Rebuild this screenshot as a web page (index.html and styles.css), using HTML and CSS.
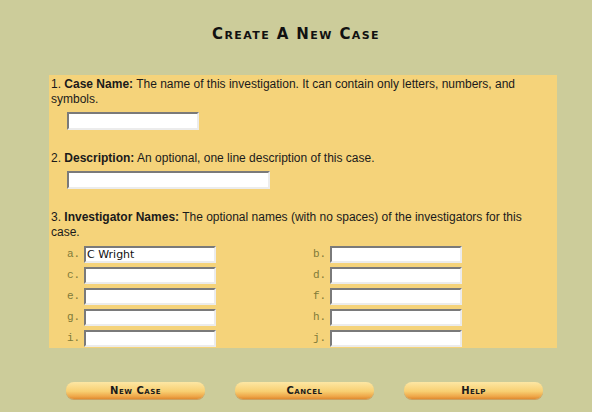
FILE: index.html
```html
<!DOCTYPE html>
<html lang="en">
<head>
    <meta charset="UTF-8">
    <title>Create A New Case</title>
    <link rel="stylesheet" href="styles.css">
</head>
<body>
    <div class="page">
        <h1 class="title">Create A New Case</h1>

        <form class="panel" id="caseForm">
            <div class="field">
                <p>1. <b>Case Name:</b> The name of this investigation. It can contain only letters, numbers, and symbols.</p>
                <input type="text" class="box box-name" name="case">
            </div>

            <div class="field">
                <p>2. <b>Description:</b> An optional, one line description of this case.</p>
                <input type="text" class="box box-desc" name="desc">
            </div>

            <div class="field">
                <p>3. <b>Investigator Names:</b> The optional names (with no spaces) of the investigators for this case.</p>
                <div class="names">
                    <label class="tag">a.</label><input type="text" class="box" name="inv1" value="C Wright"><span></span>
                    <label class="tag">b.</label><input type="text" class="box" name="inv2">
                    <label class="tag">c.</label><input type="text" class="box" name="inv3"><span></span>
                    <label class="tag">d.</label><input type="text" class="box" name="inv4">
                    <label class="tag">e.</label><input type="text" class="box" name="inv5"><span></span>
                    <label class="tag">f.</label><input type="text" class="box" name="inv6">
                    <label class="tag">g.</label><input type="text" class="box" name="inv7"><span></span>
                    <label class="tag">h.</label><input type="text" class="box" name="inv8">
                    <label class="tag">i.</label><input type="text" class="box" name="inv9"><span></span>
                    <label class="tag">j.</label><input type="text" class="box" name="inv10">
                </div>
            </div>
        </form>

        <div class="buttons">
            <button class="pill" form="caseForm">New Case</button>
            <button class="pill" type="button">Cancel</button>
            <button class="pill" type="button">Help</button>
        </div>
    </div>
</body>
</html>
```

FILE: styles.css
```css
/* Pagina de novo caso */
body {
    margin: 0;
    background-color: #ffffff;
    font-family: 'Liberation Sans', Arial, sans-serif;
}
.page {
    width: 592px;
    height: 412px;
    background-color: #cccc9a;
    padding-top: 24px;
    box-sizing: border-box;
}
.title {
    margin: 0 0 31px 0;
    text-align: center;
    font-family: 'DejaVu Sans', sans-serif;
    font-size: 15px;
    line-height: 20px;
    font-weight: bold;
    font-variant: small-caps;
    letter-spacing: 1.4px;
    color: #111;
}
.panel {
    margin-left: 49px;
    width: 508px;
    background-color: #f5d37a;
    padding: 2px 0 1px 2px;
    box-sizing: border-box;
    color: #1a1a1a;
}
.field p {
    margin: 0;
    max-width: 476px;
    font-size: 12px;
    line-height: 15px;
}
.field {
    margin-bottom: 21px;
}
.field:last-child {
    margin-bottom: 0;
}
.box {
    display: block;
    margin: 5px 0 0 16px;
    width: 132px;
    height: 18px;
    padding: 0 1px;
    box-sizing: border-box;
    background-color: #fff;
    border: 2px solid;
    border-color: #7a7a7a #ececec #ececec #7a7a7a;
    font-family: 'DejaVu Sans', sans-serif;
    font-size: 11px;
    color: #111;
    outline: none;
}
.box-desc {
    width: 203px;
}
.names {
    display: grid;
    grid-template-columns: 17px 132px 97px 17px 132px;
    grid-auto-rows: 17px;
    row-gap: 4px;
    margin: 6px 0 0 16px;
}
.names .box {
    margin: 0;
    height: 17px;
}
.tag {
    font-family: 'Liberation Mono', 'Courier New', monospace;
    font-size: 11px;
    line-height: 17px;
    color: #7f7a38;
}
.buttons {
    display: flex;
    justify-content: space-between;
    width: 477px;
    margin: 34px 0 0 66px;
}
.pill {
    width: 139px;
    height: 17px;
    padding: 0;
    border: none;
    border-radius: 8px;
    background: linear-gradient(#fde7a4, #f8cf72 55%, #eea648 85%, #e08a30);
    box-shadow: 0 1px 0 #c9a060;
    font-family: 'DejaVu Sans', sans-serif;
    font-size: 10px;
    font-weight: bold;
    font-variant: small-caps;
    letter-spacing: 0.5px;
    color: #1a1a1a;
    cursor: pointer;
}
```
